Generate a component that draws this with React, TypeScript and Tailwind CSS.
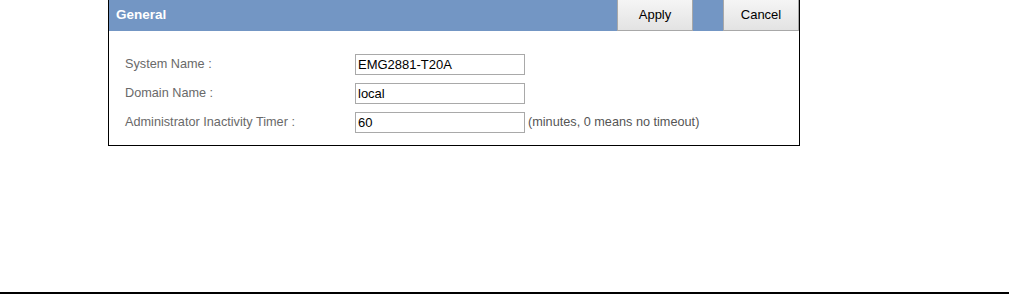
import React from "react";

const rows = [
  { label: "System Name :", value: "EMG2881-T20A" },
  { label: "Domain Name :", value: "local" },
  { label: "Administrator Inactivity Timer :", value: "60", note: "(minutes, 0 means no timeout)" },
];

export default function App() {
  return (
    <div className="w-[1009px] h-[295px] bg-white font-['Liberation_Sans',Arial,sans-serif]">
      <div className="flex flex-col h-full">
        <div className="pl-[108px]">
          <div className="w-[692px] h-[146px] border-l border-r border-b border-black flex flex-col">
            <div className="h-[31px] bg-[#7396c4] flex items-stretch">
              <div className="flex-1 flex items-center pl-[7px] text-white font-bold text-[13.5px]">General</div>
              <button className="w-[76px] h-[31px] bg-gradient-to-b from-[#f5f5f5] to-[#e3e3e3] border border-[#a8a8a8] border-t-0 text-[13px] text-black">Apply</button>
              <div className="w-[30px]" />
              <button className="w-[76px] h-[31px] bg-gradient-to-b from-[#f5f5f5] to-[#e3e3e3] border border-[#a8a8a8] border-t-0 text-[13px] text-black">Cancel</button>
            </div>
            <div className="flex flex-col gap-[8px] pt-[23px] pl-[16px]">
              {rows.map((r) => (
                <div key={r.label} className="flex items-center h-[21px]">
                  <div className="w-[230px] text-[12.7px] text-[#696969]">{r.label}</div>
                  <div className="w-[170px] h-[21px] border border-[#a9a9a9] flex items-center pl-[2px] text-[13px] text-black">{r.value}</div>
                  {r.note && <div className="pl-[3px] text-[12.7px] text-[#555]">{r.note}</div>}
                </div>
              ))}
            </div>
          </div>
        </div>
        <div className="flex-1" />
        <div className="h-[2px] bg-black mb-[1px]" />
      </div>
    </div>
  );
}
